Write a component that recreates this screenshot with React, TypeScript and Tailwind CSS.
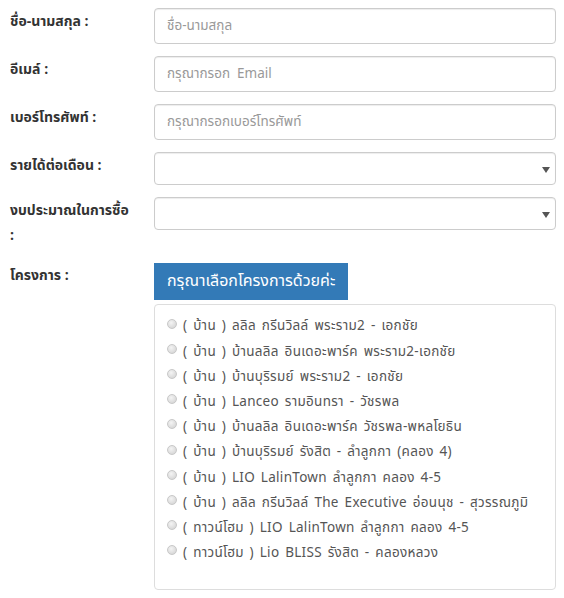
import React from "react";

const projects = [
  "( บ้าน ) ลลิล กรีนวิลล์ พระราม2 - เอกชัย",
  "( บ้าน ) บ้านลลิล อินเดอะพาร์ค พระราม2-เอกชัย",
  "( บ้าน ) บ้านบุริรมย์ พระราม2 - เอกชัย",
  "( บ้าน ) Lanceo รามอินทรา - วัชรพล",
  "( บ้าน ) บ้านลลิล อินเดอะพาร์ค วัชรพล-พหลโยธิน",
  "( บ้าน ) บ้านบุริรมย์ รังสิต - ลำลูกกา (คลอง 4)",
  "( บ้าน ) LIO LalinTown ลำลูกกา คลอง 4-5",
  "( บ้าน ) ลลิล กรีนวิลล์ The Executive อ่อนนุช - สุวรรณภูมิ",
  "( ทาวน์โฮม ) LIO LalinTown ลำลูกกา คลอง 4-5",
  "( ทาวน์โฮม ) Lio BLISS รังสิต - คลองหลวง",
];

function Label({ children }: { children: React.ReactNode }) {
  return (
    <div className="w-[144px] shrink-0 pt-[1px] text-[14px] font-bold leading-[25px] text-[#333]">
      {children}
    </div>
  );
}

function TextInput({ placeholder }: { placeholder: string }) {
  return (
    <input
      placeholder={placeholder}
      className="h-[36px] w-full rounded-[4px] border border-[#ccc] bg-white px-[12px] text-[13.5px] text-[#555] placeholder:text-[#999] shadow-[inset_0_1px_1px_rgba(0,0,0,0.075)] outline-none"
    />
  );
}

function SelectBox() {
  return (
    <div className="flex h-[33px] w-full items-center justify-end rounded-[4px] border border-[#ccc] bg-white pr-[5px] shadow-[inset_0_1px_1px_rgba(0,0,0,0.075)]">
      <svg width="8" height="6" viewBox="0 0 8 6" className="mt-[2px]">
        <path d="M0 0H8L4 6Z" fill="#555" />
      </svg>
    </div>
  );
}

function Radio() {
  return (
    <span className="mr-[6px] mt-[-6px] inline-block h-[10px] w-[10px] shrink-0 rounded-full border border-[#c8c8c8] bg-[radial-gradient(circle_at_40%_35%,#f4f4f4,#cfcfcf)]" />
  );
}

export default function App() {
  return (
    <div
      className="w-[564px] bg-white pl-[10px] pr-[8px] pt-[8px]"
      style={{ fontFamily: '"Noto Sans Thai", "Noto Sans", "Liberation Sans", sans-serif' }}
    >
      <div className="flex">
        <Label>ชื่อ-นามสกุล :</Label>
        <TextInput placeholder="ชื่อ-นามสกุล" />
      </div>
      <div className="mt-[12px] flex">
        <Label>อีเมล์ :</Label>
        <TextInput placeholder="กรุณากรอก  Email" />
      </div>
      <div className="mt-[12px] flex">
        <Label>เบอร์โทรศัพท์ :</Label>
        <TextInput placeholder="กรุณากรอกเบอร์โทรศัพท์" />
      </div>
      <div className="mt-[12px] flex">
        <Label>รายได้ต่อเดือน :</Label>
        <SelectBox />
      </div>
      <div className="mt-[12px] flex">
        <Label>
          งบประมาณในการซื้อ
          <br />:
        </Label>
        <SelectBox />
      </div>
      <div className="mt-[15px] flex">
        <div className="w-[144px] shrink-0 text-[14px] font-bold leading-[25px] text-[#333]">
          โครงการ :
        </div>
        <div className="flex-1">
          <div className="inline-block bg-[#337ab7] px-[13px] py-[6px] text-[16px] leading-[25px] text-white">
            กรุณาเลือกโครงการด้วยค่ะ
          </div>
          <div className="mt-[4px] h-[286px] rounded-[4px] border border-[#ddd] bg-white pl-[12px] pt-[9px]">
            {projects.map((p) => (
              <div
                key={p}
                className="flex h-[25.2px] items-center text-[13.5px] tracking-[0.3px] text-[#555] [word-spacing:2px]"
              >
                <Radio />
                <span>{p}</span>
              </div>
            ))}
          </div>
        </div>
      </div>
    </div>
  );
}
